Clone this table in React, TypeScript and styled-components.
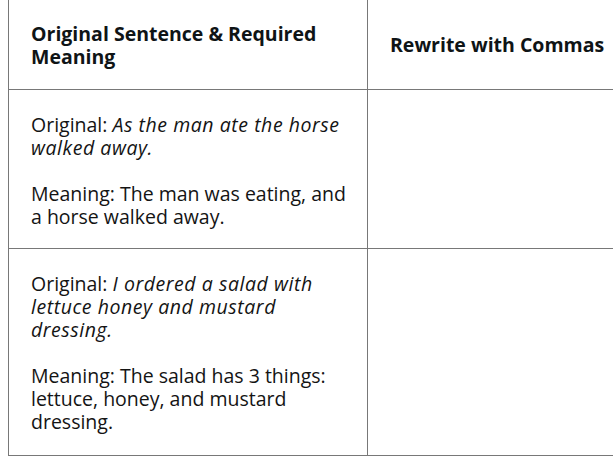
import styled, { createGlobalStyle } from "styled-components";

const Global = createGlobalStyle`
  html, body {
    margin: 0;
    padding: 0;
    background: #ffffff;
    overflow: hidden;
  }
  body {
    font-family: "Open Sans", "Liberation Sans", sans-serif;
    color: #141414;
  }
`;

const Page = styled.div`
  padding-left: 8px;
  width: 605px;
  height: 460px;
  overflow: hidden;
`;

const Table = styled.table`
  border-collapse: collapse;
  table-layout: fixed;
  width: 718px;
  margin-top: -1px;
  font-size: 19.5px;
  line-height: 23px;
`;

const Row = styled.tr<{ $h: number }>`
  height: ${(p) => p.$h}px;
`;

const Th = styled.th`
  padding: 0 22px;
  text-align: left;
  vertical-align: middle;
  font-weight: 700;
  color: #0f1416;
  border: 1px solid #787878;
`;

const Td = styled.td`
  padding: 23px 19px 20px 22px;
  vertical-align: top;
  border: 1px solid #787878;
`;

const Para = styled.p`
  margin: 0 0 23px;
  &:last-child {
    margin-bottom: 0;
  }
`;

const Quote = styled.em`
  font-style: italic;
  letter-spacing: 0.55px;
`;

const rows = [
  {
    original: "As the man ate the horse walked away.",
    meaning: "The man was eating, and a horse walked away.",
    h: 159,
  },
  {
    original: "I ordered a salad with lettuce honey and mustard dressing.",
    meaning: "The salad has 3 things: lettuce, honey, and mustard dressing.",
    h: 207,
  },
];

export default function App() {
  return (
    <Page>
      <Global />
      <Table>
        <colgroup>
          <col style={{ width: 359 }} />
          <col style={{ width: 359 }} />
        </colgroup>
        <thead>
          <Row $h={90}>
            <Th>Original Sentence &amp; Required Meaning</Th>
            <Th>Rewrite with Commas</Th>
          </Row>
        </thead>
        <tbody>
          {rows.map((r, i) => (
            <Row key={i} $h={r.h}>
              <Td>
                <Para>
                  Original: <Quote>{r.original}</Quote>
                </Para>
                <Para>Meaning: {r.meaning}</Para>
              </Td>
              <Td />
            </Row>
          ))}
        </tbody>
      </Table>
    </Page>
  );
}
